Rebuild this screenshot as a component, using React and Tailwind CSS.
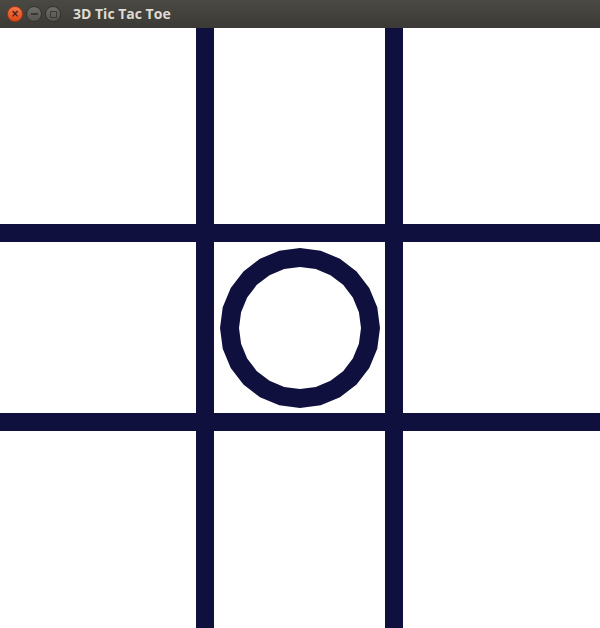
import React from 'react';

function Ring() {
    // faceted ring, like the GL polygon in the screenshot
    const sides = 24;
    const pts = (r) =>
        Array.from({ length: sides }, (_, i) => {
            const a = (i / sides) * Math.PI * 2;
            return `${(80 + r * Math.cos(a)).toFixed(2)},${(80 + r * Math.sin(a)).toFixed(2)}`;
        });
    const outer = pts(80);
    const inner = pts(61);
    const d = `M${outer.join('L')}Z M${inner.join('L')}Z`;
    return (
        <svg width="160" height="160" viewBox="0 0 160 160">
            <path d={d} fill="#10103e" fillRule="evenodd" />
        </svg>
    );
}

export default function App() {
    const cells = Array.from({ length: 9 }, (_, i) => i);

    return (
        <div className="w-[600px] h-[628px] flex flex-col bg-white overflow-hidden">
            {/* Title bar */}
            <div className="h-[28px] flex items-center bg-gradient-to-b from-[#4a4944] to-[#3b3a36] px-[7px]">
                <div className="flex items-center gap-[3px]">
                    <div className="w-[16px] h-[16px] rounded-full bg-gradient-to-b from-[#f37748] to-[#de4714] border border-[#a63a14] flex items-center justify-center text-[#3b2016] text-[10px] font-bold leading-none font-['DejaVu_Sans',sans-serif]">
                        ×
                    </div>
                    <div className="w-[16px] h-[16px] rounded-full bg-gradient-to-b from-[#6e6d68] to-[#55544f] border border-[#333330] flex items-center justify-center">
                        <div className="w-[7px] h-[2px] bg-[#3a3935]" />
                    </div>
                    <div className="w-[16px] h-[16px] rounded-full bg-gradient-to-b from-[#6e6d68] to-[#55544f] border border-[#333330] flex items-center justify-center">
                        <div className="w-[7px] h-[7px] border-[1.5px] border-[#3a3935]" />
                    </div>
                </div>
                <span className="ml-[12px] text-[#dfdbd2] text-[14px] font-bold leading-none font-['Open_Sans',sans-serif]">
                    3D Tic Tac Toe
                </span>
            </div>

            {/* Board */}
            <div className="grid grid-cols-[196px_171px_197px] grid-rows-[196px_171px_197px] gap-[18px] bg-[#10103e] w-[600px] h-[600px]">
                {cells.map((i) => (
                    <div key={i} className="bg-white flex items-center justify-center">
                        {i === 4 && <Ring />}
                    </div>
                ))}
            </div>
        </div>
    );
}
